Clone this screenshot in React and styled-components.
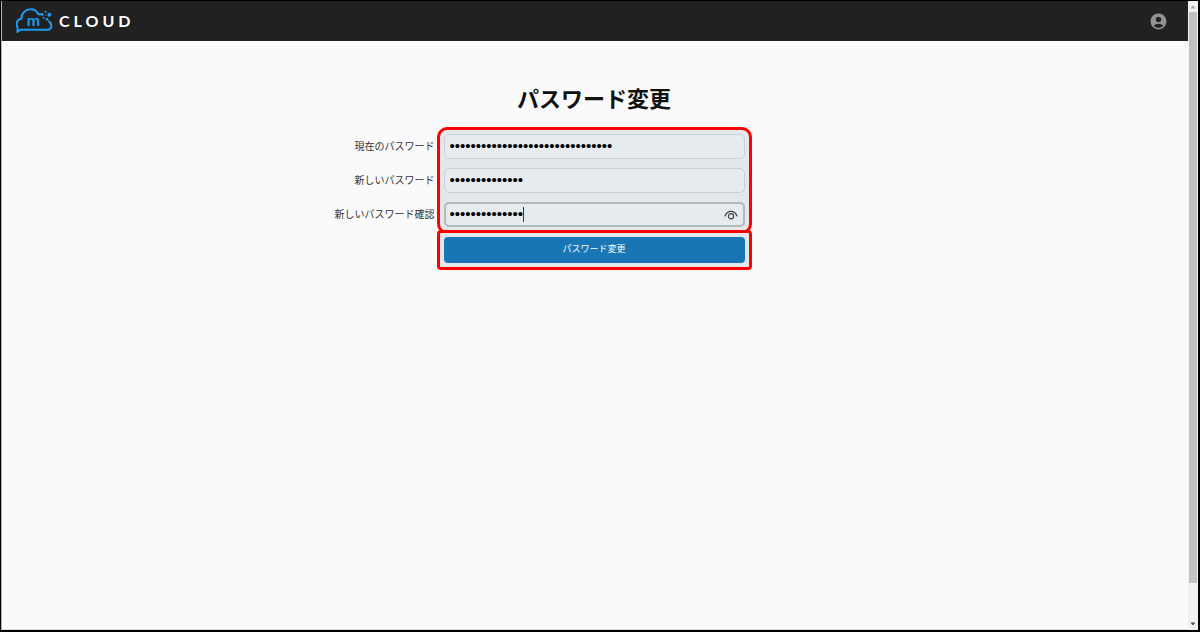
import React, { useState } from "react";
import { MdAccountCircle } from "react-icons/md";
import styled, { createGlobalStyle } from "styled-components";

const App = () => {
  const [current, setCurrent] = useState("x".repeat(31));
  const [next, setNext] = useState("x".repeat(14));
  const [confirm, setConfirm] = useState("x".repeat(14));

  return (
    <>
      <GlobalStyle />
      <Screen>
        <Page>
          <Header>
            <Brand href="#">
              <CloudLogo />
              <BrandName>CLOUD</BrandName>
            </Brand>
            <AccountButton type="button" aria-label="アカウント">
              <MdAccountCircle size={19} />
            </AccountButton>
          </Header>
          <Main>
            <Title>パスワード変更</Title>
            <Form onSubmit={(e) => e.preventDefault()}>
              <Labels>
                <Label htmlFor="current">現在のパスワード</Label>
                <Label htmlFor="next">新しいパスワード</Label>
                <Label htmlFor="confirm">新しいパスワード確認</Label>
              </Labels>
              <Frames>
                <Frame $radius={10}>
                  <Field>
                    <Input
                      id="current"
                      type="password"
                      value={current}
                      onChange={(e) => setCurrent(e.target.value)}
                    />
                  </Field>
                  <Field>
                    <Input id="next" type="password" value={next} onChange={(e) => setNext(e.target.value)} />
                  </Field>
                  <Field>
                    <Input
                      id="confirm"
                      type="password"
                      $active
                      value={confirm}
                      onChange={(e) => setConfirm(e.target.value)}
                    />
                    <Caret />
                    <RevealButton type="button" aria-label="パスワードを表示">
                      <EyeIcon />
                    </RevealButton>
                  </Field>
                </Frame>
                <Frame $radius={4}>
                  <SubmitButton type="submit">パスワード変更</SubmitButton>
                </Frame>
              </Frames>
            </Form>
          </Main>
        </Page>
        <Scrollbar aria-hidden="true">
          <Arrow viewBox="0 0 10 11" fill="#a3a3a3">
            <path d="M2.5 7.5h5L5 4.5z" />
          </Arrow>
          <Track>
            <Thumb />
          </Track>
          <Arrow viewBox="0 0 10 11" fill="#505050">
            <path d="M2.5 3.5h5L5 6.5z" />
          </Arrow>
        </Scrollbar>
      </Screen>
    </>
  );
};

export default App;

const CloudLogo = () => (
  <svg width="37" height="26" viewBox="48 23 111 78" fill="none" stroke="#1d9bf0" strokeWidth="6" aria-hidden="true">
    <path
      d="M126 42H115C111 33 103 27 92 27C76 27 64 39 64 55C55 57 50 64 50 72C50 76 51 79 53 82L52 95L62 88H142C149 88 154 83 154 76C154 70 151 66 147 63"
      strokeLinejoin="round"
      strokeLinecap="round"
    />
    <g fill="#1d9bf0" stroke="none">
      <circle cx="127" cy="42" r="4" />
      <circle cx="137" cy="34" r="3" />
      <circle cx="148" cy="43" r="6" />
      <circle cx="137" cy="45" r="2" />
      <circle cx="131" cy="52" r="3" />
      <circle cx="141" cy="57" r="4" />
      <LogoText x="100" y="78" textAnchor="middle">
        m
      </LogoText>
    </g>
  </svg>
);

const EyeIcon = () => (
  <svg width="14" height="10" viewBox="0 0 14 10" fill="none" stroke="#3c4043" strokeWidth="1.2" aria-hidden="true">
    <path d="M1 6C2.2 3 4.3 1.4 7 1.4S11.8 3 13 6" strokeLinecap="round" />
    <circle cx="7" cy="6.2" r="2.6" />
  </svg>
);

const GlobalStyle = createGlobalStyle`
  * {
    box-sizing: border-box;
  }
  body {
    margin: 0;
    color: #111;
    background: #fafafa;
    font-family: "Noto Sans CJK JP", sans-serif;
  }
`;

const Screen = styled.div`
  display: flex;
  min-height: 100vh;
  border: 1px solid #000;
  border-width: 1px 2px 2px 1px;
`;

const Page = styled.div`
  flex: 1;
  border-left: 1px solid #b5b5b5;
  border-bottom: 1px solid #ddd;
`;

const Header = styled.header`
  display: flex;
  align-items: center;
  justify-content: space-between;
  height: 40px;
  padding: 0 20px 0 14px;
  background: #212121;
`;

const Brand = styled.a`
  display: flex;
  align-items: center;
  gap: 6px;
  color: #fff;
  text-decoration: none;
`;

const BrandName = styled.span`
  font-family: Lato, sans-serif;
  font-size: 16px;
  font-weight: 700;
  line-height: 20px;
  letter-spacing: 4px;
`;

const LogoText = styled.text`
  font-family: Lato, sans-serif;
  font-size: 48px;
  font-weight: 700;
`;

const AccountButton = styled.button`
  display: flex;
  padding: 0;
  border: 0;
  background: none;
  color: #929292;
  cursor: pointer;
`;

const Main = styled.main`
  padding: 40px 2px 40px 0;
`;

const Title = styled.h1`
  margin: 0 0 14px;
  font-size: 22px;
  font-weight: 700;
  line-height: 32px;
  text-align: center;
`;

const Form = styled.form`
  display: grid;
  grid-template-columns: 1fr 315px 1fr;
  column-gap: 2px;
`;

const Labels = styled.div`
  display: flex;
  flex-direction: column;
  align-items: flex-end;
  gap: 9px;
  padding-top: 6px;
`;

const Label = styled.label`
  color: #333;
  font-size: 10px;
  line-height: 25px;
`;

const Frames = styled.div`
  display: flex;
  flex-direction: column;
`;

const Frame = styled.div`
  display: flex;
  flex-direction: column;
  gap: 9px;
  padding: 4px;
  border: 3px solid #fe0000;
  border-radius: ${({ $radius }) => $radius}px;
  background: #e3e8ec;

  & + & {
    margin-top: -4px;
  }
`;

const Field = styled.div`
  position: relative;
  display: flex;
`;

const Input = styled.input`
  width: 100%;
  height: 25px;
  padding: 0 24px 2px ${({ $active }) => ($active ? 4 : 5)}px;
  border: ${({ $active }) => ($active ? "2px solid #b4b9bc" : "1px solid #cbd0d4")};
  border-radius: 5px;
  outline: none;
  background: #e6ebef;
  color: #000;
  font-family: "Liberation Sans", sans-serif;
  font-size: 15px;
`;

const Caret = styled.span`
  position: absolute;
  top: 5px;
  left: 79px;
  width: 1px;
  height: 15px;
  background: #333;
`;

const RevealButton = styled.button`
  position: absolute;
  top: 8px;
  right: 7px;
  display: flex;
  padding: 0;
  border: 0;
  background: none;
  cursor: pointer;
`;

const SubmitButton = styled.button`
  height: 26px;
  padding: 0 0 4px;
  border: 0;
  border-radius: 4px;
  background: #1976b5;
  color: #fff;
  font-family: inherit;
  font-size: 9px;
  cursor: pointer;
`;

const Scrollbar = styled.div`
  display: flex;
  flex-direction: column;
  width: 10px;
  background: #f1f1f1;
`;

const Arrow = styled.svg`
  width: 10px;
  height: 11px;
`;

const Track = styled.div`
  flex: 1;
  padding: 0 1px;
`;

const Thumb = styled.div`
  height: 94%;
  background: #c1c1c1;
`;
